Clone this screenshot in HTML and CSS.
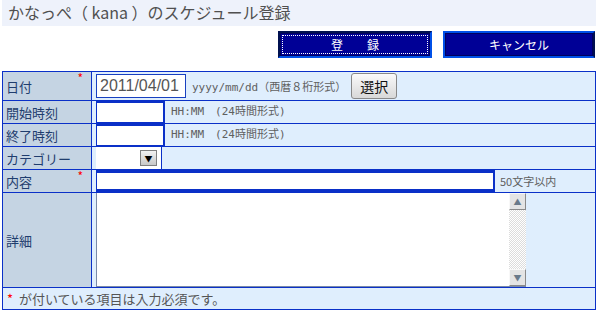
FILE: index.html
```html
<!DOCTYPE html>
<html lang="ja">
<head>
    <meta charset="UTF-8">
    <title>スケジュール登録</title>
    <link rel="stylesheet" href="styles.css">
</head>
<body>

    <h1 class="page-title">かなっぺ（ kana ）のスケジュール登録</h1>

    <div class="actions">
        <button class="nav-btn focused">登　　録</button>
        <button class="nav-btn">キャンセル</button>
    </div>

    <table class="form-table">
        <tr class="row-date">
            <th>日付<span class="req">*</span></th>
            <td>
                <input class="date-input" type="text" value="2011/04/01">
                <span class="hint">yyyy/mm/dd（西暦８桁形式）</span>
                <button class="pick-btn">選択</button>
            </td>
        </tr>
        <tr>
            <th>開始時刻</th>
            <td class="split">
                <input class="time-input" type="text">
                <span class="hint">HH:MM　(24時間形式)</span>
            </td>
        </tr>
        <tr>
            <th>終了時刻</th>
            <td class="split">
                <input class="time-input" type="text">
                <span class="hint">HH:MM　(24時間形式)</span>
            </td>
        </tr>
        <tr>
            <th>カテゴリー</th>
            <td class="split">
                <span class="select-box"><span class="select-arrow">▼</span></span>
            </td>
        </tr>
        <tr>
            <th>内容<span class="req">*</span></th>
            <td class="split">
                <input class="title-input" type="text">
                <span class="limit">50文字以内</span>
            </td>
        </tr>
        <tr class="row-detail">
            <th>詳細</th>
            <td class="split">
                <div class="memo">
                    <textarea class="memo-text"></textarea>
                    <div class="scrollbar">
                        <span class="sb-btn">▲</span>
                        <span class="sb-track"></span>
                        <span class="sb-btn">▼</span>
                    </div>
                </div>
            </td>
        </tr>
        <tr class="row-note">
            <td colspan="2"><span class="req-mark">*</span> が付いている項目は入力必須です。</td>
        </tr>
    </table>

</body>
</html>
```

FILE: styles.css
```css
body {
    margin: 0;
    font-family: "Noto Sans CJK JP", "Liberation Sans", sans-serif;
    background-color: #fff;
    color: #555;
}

.page-title {
    margin: 0 2px;
    height: 26px;
    padding-left: 6px;
    font-size: 16px;
    font-weight: normal;
    line-height: 25px;
    white-space: pre;
    color: #505050;
    background-color: #eef2fb;
}

.actions {
    display: flex;
    justify-content: flex-end;
    gap: 11px;
    padding: 5px 3px 0 0;
    height: 40px;
}

.nav-btn {
    width: 152px;
    height: 27px;
    padding: 0;
    font-family: inherit;
    font-size: 12px;
    color: #fff;
    background-color: #000096;
    border: 2px solid;
    border-color: #0050e8 #001050 #0050e8 #0050e8;
    box-shadow: inset 0 0 0 1px #000060;
    cursor: pointer;
}

.nav-btn.focused {
    width: 154px;
    border-color: #001050 #0050e8 #0050e8 #001050;
    outline: 1px dotted #fff;
    outline-offset: -5px;
}

.form-table {
    width: 594px;
    margin-left: 2px;
    border-collapse: collapse;
    border: 1px solid #0a30c8;
    background-color: #dfeefd;
}

.form-table th,
.form-table td {
    border: 1px solid #0a30c8;
    padding: 0;
}

.form-table th {
    position: relative;
    width: 85px;
    padding-left: 3px;
    text-align: left;
    font-size: 13px;
    font-weight: normal;
    color: #1f3d6e;
    background-color: #c5d4e3;
    height: 22px;
}

.req {
    position: absolute;
    top: 0;
    right: 8px;
    font-size: 12px;
    line-height: 12px;
    color: #f00;
}

.form-table td {
    padding-left: 4px;
    font-size: 0;
    white-space: nowrap;
}

.row-date th,
.row-date td {
    height: 28px;
}

.date-input {
    width: 82px;
    height: 22px;
    padding: 0 3px;
    margin: 0;
    vertical-align: middle;
    font-family: "Liberation Sans", sans-serif;
    font-size: 16px;
    color: #555;
    border: 1px solid #1840c0;
}

.hint {
    display: inline-block;
    margin-left: 5px;
    vertical-align: middle;
    font-family: "DejaVu Sans Mono", "Noto Sans CJK JP", monospace;
    font-size: 10px;
    color: #606060;
}

.row-date .hint {
    margin-left: 6px;
    font-size: 11px;
}

.pick-btn {
    margin-left: 5px;
    width: 46px;
    height: 26px;
    padding: 0;
    vertical-align: middle;
    font-family: inherit;
    font-size: 14px;
    color: #111;
    background: linear-gradient(#fafafa, #d8d8d8);
    border: 1px solid #888;
    border-radius: 3px;
}

.split {
    height: 22px;
}

.time-input {
    box-sizing: border-box;
    width: 68px;
    height: 22px;
    margin: 0;
    vertical-align: middle;
    background-color: #fff;
    border: 1px solid #0a30c8;
    border-top-width: 2px;
}

.time-input + .hint {
    height: 22px;
    line-height: 22px;
    margin-left: 0;
    padding-left: 6px;
    font-size: 11px;
    border-left: 1px solid #0a30c8;
}

.select-box {
    position: relative;
    display: inline-block;
    box-sizing: border-box;
    width: 66px;
    height: 22px;
    vertical-align: middle;
    background-color: #fff;
    border-right: 1px solid #0a30c8;
}

.select-arrow {
    position: absolute;
    right: 4px;
    top: 3px;
    width: 17px;
    height: 16px;
    font-size: 8px;
    line-height: 16px;
    text-align: center;
    color: #000;
    background: linear-gradient(#f2f2f2, #c8c8c8);
    border: 1px solid #808080;
    box-sizing: border-box;
}

.title-input {
    box-sizing: border-box;
    width: 398px;
    height: 22px;
    margin: 0;
    vertical-align: middle;
    background-color: #fff;
    border: 1px solid #0a30c8;
    border-width: 3px 1px 3px 1px;
}

.limit {
    display: inline-block;
    height: 22px;
    line-height: 22px;
    padding-left: 5px;
    vertical-align: middle;
    font-size: 11px;
    color: #606060;
    border-left: 1px solid #0a30c8;
}

.row-detail th,
.row-detail td {
    height: 94px;
}

.memo {
    display: flex;
    width: 430px;
    height: 94px;
    box-sizing: border-box;
    border-left: 1px solid #7a8aa8;
    border-bottom: 1px solid #7a8aa8;
}

.memo-text {
    flex: 1;
    margin: 0;
    padding: 0;
    border: none;
    resize: none;
    background-color: #fff;
}

.scrollbar {
    display: flex;
    flex-direction: column;
    width: 17px;
    background: repeating-conic-gradient(#dcdcdc 0 25%, #fff 0 50%) 0 0 / 2px 2px;
}

.sb-btn {
    height: 17px;
    box-sizing: border-box;
    font-size: 8px;
    line-height: 15px;
    text-align: center;
    color: #6a7a8a;
    background-color: #e4e4e4;
    border: 1px solid;
    border-color: #f8f8f8 #8a8a8a #8a8a8a #f8f8f8;
}

.sb-track {
    flex: 1;
}

.row-note td {
    height: 21px;
    padding-left: 4px;
    font-size: 13px;
    color: #555;
}

.req-mark {
    color: #f00;
    margin-right: 3px;
}
```
